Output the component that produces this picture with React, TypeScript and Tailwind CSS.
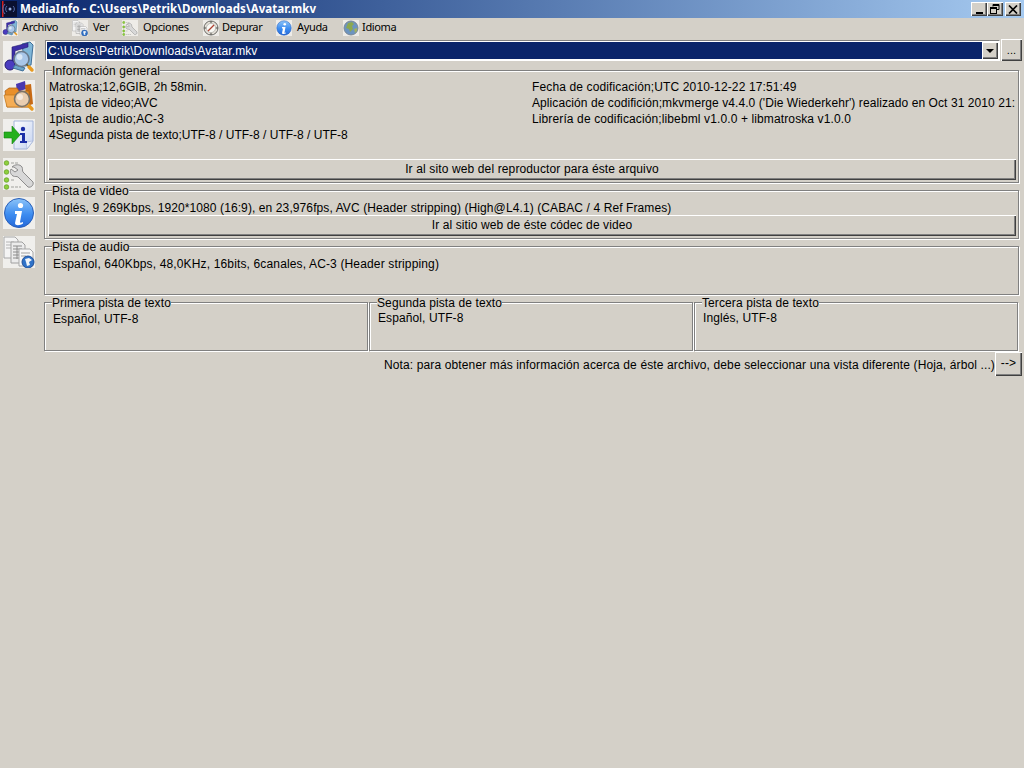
import React from 'react';

const raised =
  'bg-[#d4d0c8] shadow-[inset_1px_1px_0_#ffffff,inset_-1px_-1px_0_#404040,inset_-2px_-2px_0_#808080]';
const etched =
  'border border-[#808080] shadow-[1px_1px_0_#ffffff,inset_1px_1px_0_#ffffff]';

type IconProps = { size?: number };

function MediaIcon({ size = 32 }: IconProps) {
  return (
    <svg width={size} height={size} viewBox="0 0 32 32">
      <path d="M19 3l8-2 3 3-2 20-6 1z" fill="#7fb6d8" stroke="#3f6f98" />
      <path d="M9 6l16-4v4L12 10v14h-3z" fill="#3d2fa8" stroke="#241a70" strokeWidth="0.6" />
      <circle cx="7" cy="24" r="5" fill="#4a3cc0" stroke="#241a70" />
      <path d="M10 27l10 3 2-3-10-3z" fill="#6da4c8" stroke="#3f6f98" />
      <circle cx="18.5" cy="18" r="7.5" fill="#a9c6e8" stroke="#6a7a8c" strokeWidth="1.6" />
      <circle cx="16.5" cy="16" r="3" fill="#dbe8f6" />
      <path d="M23.5 23l4.5 5" stroke="#6a5a30" strokeWidth="1.5" />
      <path d="M26 26l3 3" stroke="#e89a20" strokeWidth="3.4" strokeLinecap="round" />
    </svg>
  );
}

function FolderIcon({ size = 32 }: IconProps) {
  return (
    <svg width={size} height={size} viewBox="0 0 32 32">
      <path d="M13 4l9-3 1 8-9 3z" fill="#4a38b0" />
      <path d="M22 5l6-1 2 20-6 2z" fill="#c76a14" />
      <path d="M2 11l4-3h8l2 3h10v16H4z" fill="#e98f2a" stroke="#a85c10" strokeWidth="0.7" />
      <path d="M1 15h24l2 12H4z" fill="#f5ad55" stroke="#c27518" strokeWidth="0.7" />
      <circle cx="19" cy="19" r="7.5" fill="#e9cdb0" stroke="#7c7468" strokeWidth="1.6" />
      <circle cx="17" cy="17" r="3" fill="#f5e8dc" />
      <path d="M26 26l3 3" stroke="#e89a20" strokeWidth="3.4" strokeLinecap="round" />
    </svg>
  );
}

function ExportIcon({ size = 32 }: IconProps) {
  return (
    <svg width={size} height={size} viewBox="0 0 32 32">
      <defs>
        <linearGradient id="sheet" x1="0" y1="0" x2="1" y2="1">
          <stop offset="0" stopColor="#ffffff" />
          <stop offset="1" stopColor="#c4d2f0" />
        </linearGradient>
      </defs>
      <path d="M11 2h19v20l-6 8H11z" fill="url(#sheet)" stroke="#a4b4d8" />
      <path d="M24 30l-1-7 7-1z" fill="#e8eefa" stroke="#a4b4d8" strokeWidth="0.6" />
      <circle cx="20" cy="10" r="2.2" fill="#1c2fa8" />
      <path d="M17 14h5v8h2v2h-7v-2h2v-6h-2z" fill="#1c2fa8" />
      <path d="M1 13h8V7l8 9-8 9v-6H1z" fill="#24b01c" stroke="#16800f" strokeWidth="0.6" />
    </svg>
  );
}

function ToolsIcon({ size = 32 }: IconProps) {
  const rows = [5, 14, 22, 29];
  return (
    <svg width={size} height={size} viewBox="0 0 32 32">
      <path d="M8 5h8M8 14h4M8 22h4M8 29h10" stroke="#c8c8c4" strokeWidth="2" strokeDasharray="3 1" />
      {rows.map((y) => (
        <circle key={y} cx="3.5" cy={y} r="2.3" fill="#8ed03c" stroke="#5f9a20" strokeWidth="0.7" />
      ))}
      <path
        d="M9 9c3-3 8-3 10 0 1 2 0 4 1 5l10 10c1 3-2 6-5 5L15 19c-1-1-3 0-5-1-3-2-3-5-2-7l4 3 3-2-4-3z"
        fill="#d8d8d8"
        stroke="#8c8c8c"
      />
    </svg>
  );
}

function InfoIcon({ size = 32 }: IconProps) {
  return (
    <svg width={size} height={size} viewBox="0 0 32 32">
      <defs>
        <linearGradient id={`ball${size}`} x1="0" y1="0" x2="0" y2="1">
          <stop offset="0" stopColor="#8cc4f8" />
          <stop offset="0.55" stopColor="#3c8cf0" />
          <stop offset="1" stopColor="#2468d8" />
        </linearGradient>
      </defs>
      <circle cx="16" cy="16" r="14.5" fill={`url(#ball${size})`} stroke="#2a5fb8" />
      <circle cx="17.5" cy="8.5" r="2.6" fill="#ffffff" />
      <path d="M12 14h7l-2 11c0 1 1 1 3 0v1.5c-3 2-8 2.5-8-.5l2-9h-2z" fill="#ffffff" />
    </svg>
  );
}

function SheetsIcon({ size = 32 }: IconProps) {
  return (
    <svg width={size} height={size} viewBox="0 0 32 32">
      <path d="M1 1h11l3 3v18H1z" fill="#f4f4f4" stroke="#a8a8a8" />
      <path d="M3 6h8M3 9h8M3 12h6" stroke="#b4b4b4" />
      <path d="M8 6h11l3 3v18H8z" fill="#ececec" stroke="#a0a0a0" />
      <path d="M10 10h9M10 13h9M10 16h9M10 19h9M10 22h9M14 10v13" stroke="#8c8c8c" />
      <path d="M16 13h11l3 3v14H16z" fill="#f8f8f8" stroke="#a8a8a8" />
      <path d="M18 17h9M18 20h5" stroke="#a0a0a0" />
      <circle cx="25" cy="26" r="6" fill="#2f72c8" stroke="#1f4f98" />
      <path d="M22 23l4-1 3 2-3 2 1 3-3 1-1-4z" fill="#f0f4f8" />
    </svg>
  );
}

function BugIcon({ size = 16 }: IconProps) {
  return (
    <svg width={size} height={size} viewBox="0 0 16 16">
      <circle cx="8" cy="8" r="7" fill="#e4e0d8" stroke="#6c6c68" />
      <circle cx="8" cy="8" r="4.6" fill="#f8f8f4" stroke="#a8a8a4" strokeWidth="0.7" />
      <path d="M5 11l6-6" stroke="#b04030" strokeWidth="1.2" />
      <path d="M8 1v2M8 13v2M1 8h2M13 8h2" stroke="#4c4c48" />
    </svg>
  );
}

function GlobeIcon({ size = 16 }: IconProps) {
  return (
    <svg width={size} height={size} viewBox="0 0 16 16">
      <circle cx="8" cy="8" r="7" fill="#6c94c0" stroke="#7c8894" />
      <path d="M5 3l4-1 2 2-2 2 1 3-3 3-1-3-3-1z" fill="#8ca850" />
      <path d="M11 9l3-1v3l-2 2z" fill="#a0b060" />
    </svg>
  );
}

function GroupBox({ title, className, children }: { title: string; className: string; children: React.ReactNode }) {
  return (
    <fieldset className={`${etched} ${className}`}>
      <legend className="ml-[7px] h-[13px] text-[12px] leading-[15px] bg-[#d4d0c8]">{title}</legend>
      {children}
    </fieldset>
  );
}

const menuItems = [
  { label: 'Archivo', w: 'w-[70px] gap-[4px]', icon: <MediaIcon size={16} /> },
  { label: 'Ver', w: 'w-[50px] gap-[5px]', icon: <SheetsIcon size={16} /> },
  { label: 'Opciones', w: 'w-[81px] gap-[5px]', icon: <ToolsIcon size={16} /> },
  { label: 'Depurar', w: 'w-[73px] gap-[3px]', icon: <BugIcon /> },
  { label: 'Ayuda', w: 'w-[67px] gap-[5px]', icon: <InfoIcon size={16} /> },
  { label: 'Idioma', w: 'w-[60px] gap-[3px]', icon: <GlobeIcon /> },
];

const sideIcons = [
  <MediaIcon key="media" />,
  <FolderIcon key="folder" />,
  <ExportIcon key="export" />,
  <ToolsIcon key="tools" />,
  <InfoIcon key="info" />,
  <SheetsIcon key="sheets" />,
];

const textTracks = [
  { title: 'Primera pista de texto', body: 'Español, UTF-8', pad: 'pt-[2px]' },
  { title: 'Segunda pista de texto', body: 'Español, UTF-8', pad: 'pt-[1px]' },
  { title: 'Tercera pista de texto', body: 'Inglés, UTF-8', pad: 'pt-[1px]' },
];

export default function App() {
  return (
    <div className="w-[1024px] h-[768px] overflow-hidden bg-[#d4d0c8] text-black text-[12px] leading-[16px] tracking-[0.1px] font-['Liberation_Sans',Arial,sans-serif]">
      {/* title bar */}
      <div className="h-[18px] flex items-center bg-gradient-to-r from-[#0a246a] to-[#a6caf0]">
        <div className="w-[18px] h-[18px] pl-[1px] flex items-center">
          <svg width="16" height="16" viewBox="0 0 16 16">
            <rect width="16" height="16" fill="#0a1030" />
            <rect x="1" width="1.5" height="16" fill="#d02020" />
            <circle cx="9" cy="8" r="1.5" fill="#9ab0e0" />
            <path d="M6 5a4 4 0 0 0 0 6M12 5a4 4 0 0 1 0 6M4 3a7 7 0 0 0 0 10" stroke="#5870b0" fill="none" />
          </svg>
        </div>
        <div className="ml-[2px] text-white font-bold text-[11.5px] leading-[18px] tracking-[0.06px] font-['Noto_Sans',Arial,sans-serif]">
          MediaInfo - C:\Users\Petrik\Downloads\Avatar.mkv
        </div>
        <div className="ml-auto mr-[3px] flex">
          <button className={`${raised} w-[16px] h-[14px] flex items-end justify-center pb-[2px]`}>
            <span className="block w-[7px] h-[2px] bg-black" />
          </button>
          <button className={`${raised} w-[16px] h-[14px] flex items-center justify-center`}>
            <svg width="10" height="10" viewBox="0 0 10 10" fill="none" stroke="#000">
              <path d="M3 2.5V0.5h6v5H7" />
              <path d="M3 1.5h6" />
              <rect x="0.5" y="3.5" width="6" height="6" />
              <path d="M1 4.5h5" />
            </svg>
          </button>
          <button className={`${raised} ml-[2px] w-[16px] h-[14px] flex items-center justify-center`}>
            <svg width="10" height="9" viewBox="0 0 10 9" stroke="#000" strokeWidth="1.7">
              <path d="M1 0.5l8 8M9 0.5l-8 8" />
            </svg>
          </button>
        </div>
      </div>

      {/* menu */}
      <div className="h-[20px] pl-[2px] flex items-center text-[11px] tracking-[-0.35px] font-['Noto_Sans',Arial,sans-serif]">
        {menuItems.map((item) => (
          <div key={item.label} className={`${item.w} flex items-center`}>
            <span className="w-[16px] h-[16px] bg-[#eeece8]">{item.icon}</span>
            <span className="pb-[2px]">{item.label}</span>
          </div>
        ))}
      </div>

      <div className="flex">
        {/* side toolbar */}
        <div className="w-[44px] shrink-0 pl-[3px] pt-[3px] flex flex-col gap-[7px]">
          {sideIcons.map((icon) => (
            <div key={icon.key} className="w-[32px] h-[32px] bg-[#f0efec]">
              {icon}
            </div>
          ))}
        </div>

        <div className="w-[980px] pt-[1px]">
          {/* file combo */}
          <div className="h-[22px] flex">
            <div className="w-[955px] shrink-0 h-[21px] mt-[1px] ml-[1px] flex border border-[#808080] border-r-white border-b-white bg-white p-[1px]">
              <div className="flex-1 bg-[#0a246a] text-white leading-[18px] pl-[1px]">C:\Users\Petrik\Downloads\Avatar.mkv</div>
              <button className={`${raised} w-[16px] h-[17px] flex items-center justify-center`}>
                <span className="block w-0 h-0 border-x-[4px] border-x-transparent border-t-[4px] border-t-black" />
              </button>
            </div>
            <button className={`${raised} ml-[1px] w-[21px] h-[22px] text-[11px] leading-[16px]`}>...</button>
          </div>

          {/* general */}
          <GroupBox title="Información general" className="mt-[3px] w-[975px]">
            <div className="h-[105px] pl-[3px] pt-[2px]">
              <div className="h-[80px] pl-[1px] flex">
                <div className="w-[483px] shrink-0">
                  <div className="tracking-[0.07px]">Matroska;12,6GIB, 2h 58min.</div>
                  <div className="tracking-[0.05px]">1pista de video;AVC</div>
                  <div className="tracking-[0.15px]">1pista de audio;AC-3</div>
                  <div className="tracking-normal">4Segunda pista de texto;UTF-8 / UTF-8 / UTF-8 / UTF-8</div>
                </div>
                <div className="w-[484px] whitespace-nowrap">
                  <div className="tracking-[0.13px]">Fecha de codificación;UTC 2010-12-22 17:51:49</div>
                  <div className="tracking-[0.08px]">Aplicación de codifición;mkvmerge v4.4.0 ('Die Wiederkehr') realizado en Oct 31 2010 21:</div>
                  <div className="tracking-[0.12px]">Librería de codificación;libebml v1.0.0 + libmatroska v1.0.0</div>
                </div>
              </div>
              <button className={`${raised} w-[968px] h-[21px] pb-[2px] tracking-[0.13px]`}>Ir al sito web del reproductor para éste arquivo</button>
            </div>
          </GroupBox>

          {/* video */}
          <GroupBox title="Pista de video" className="mt-[1px] w-[975px]">
            <div className="h-[41px] pl-[3px] pt-[3px]">
              <div className="pl-[5px] h-[15px]">Inglés, 9 269Kbps, 1920*1080 (16:9), en 23,976fps, AVC (Header stripping) (High@L4.1) (CABAC / 4 Ref Frames)</div>
              <button className={`${raised} w-[968px] h-[21px] pb-[2px]`}>Ir al sitio web de éste códec de video</button>
            </div>
          </GroupBox>

          {/* audio */}
          <GroupBox title="Pista de audio" className="mt-[1px] w-[975px]">
            <div className="h-[41px] pl-[8px] pt-[3px] tracking-[0.145px]">Español, 640Kbps, 48,0KHz, 16bits, 6canales, AC-3 (Header stripping)</div>
          </GroupBox>

          {/* text tracks */}
          <div className="mt-[1px] flex gap-[1px]">
            {textTracks.map((track) => (
              <GroupBox key={track.title} title={track.title} className="w-[324px]">
                <div className={`h-[41px] pl-[8px] ${track.pad}`}>{track.body}</div>
              </GroupBox>
            ))}
          </div>

          {/* note */}
          <div className="mt-[1px] w-[978px] h-[24px] flex items-center justify-end">
            <span className="pt-[2px] tracking-[0.124px]">Nota: para obtener más información acerca de éste archivo, debe seleccionar una vista diferente (Hoja, árbol ...)</span>
            <button className={`${raised} w-[27px] h-[24px] pb-[2px]`}>--&gt;</button>
          </div>
        </div>
      </div>
    </div>
  );
}
